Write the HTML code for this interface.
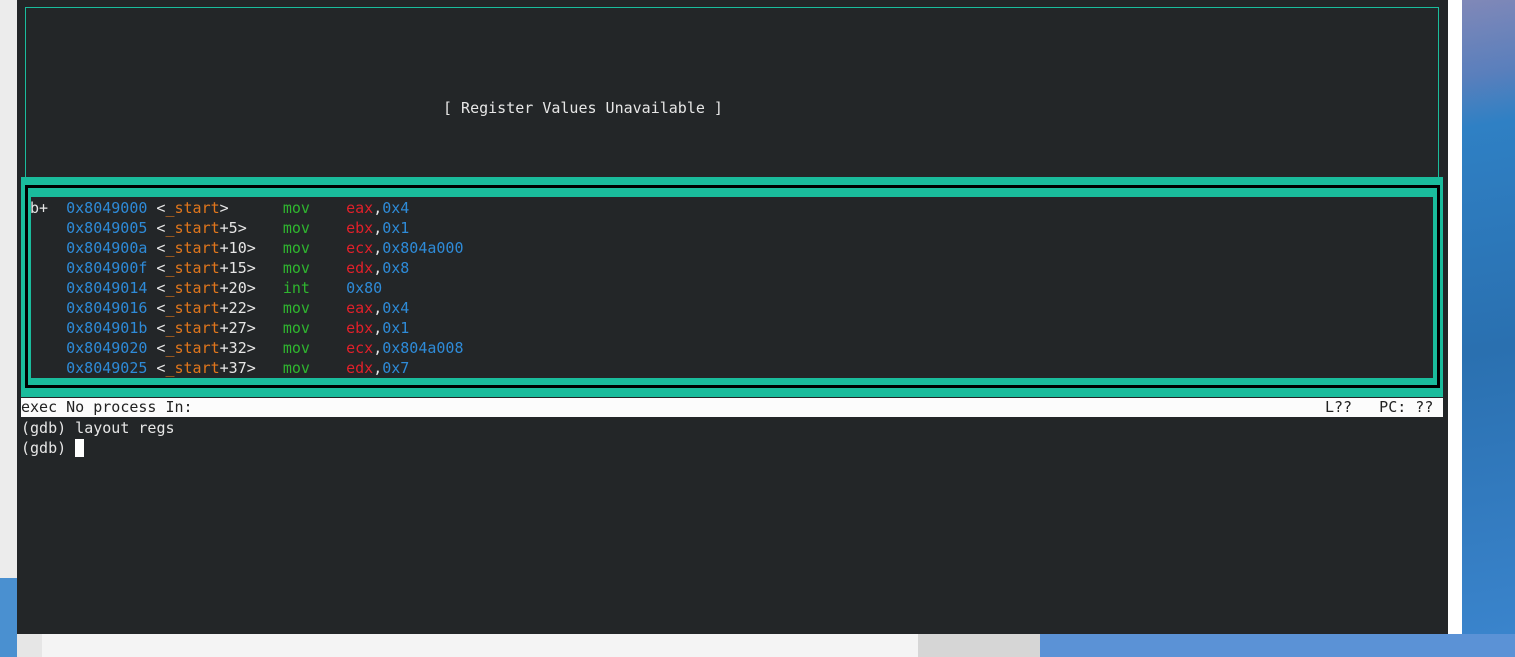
<!DOCTYPE html>
<html><head><style>
body{margin:0;width:1515px;height:657px;position:relative;overflow:hidden;background:#2f7fc0;font-family:"DejaVu Sans Mono","Liberation Mono",monospace;font-size:15px}
.a{position:absolute}
pre{margin:0;font:inherit;line-height:20px;white-space:pre}
.b{color:#2e8bd8}.o{color:#e0761c}.g{color:#2fb52f}.r{color:#e0202a}.w{color:#e6e6e6}
</style></head><body>
<div class="a" style="left:1462px;top:0;width:53px;height:634px;background:linear-gradient(170deg,#8088b8 0%,#5a7fbc 12%,#2f80c4 20%,#2a70b0 55%,#3a84cc 100%)"></div>
<div class="a" style="left:0;top:0;width:18px;height:578px;background:#ececec"></div>
<div class="a" style="left:0;top:578px;width:18px;height:79px;background:#4a90d0"></div>
<div class="a" style="left:17px;top:634px;width:25px;height:23px;background:#e6e6e6"></div>
<div class="a" style="left:42px;top:634px;width:876px;height:23px;background:#f4f4f4"></div>
<div class="a" style="left:918px;top:634px;width:122px;height:23px;background:#d6d6d6"></div>
<div class="a" style="left:1040px;top:634px;width:475px;height:23px;background:#5b92d6"></div>
<div class="a" style="left:1448px;top:0;width:14px;height:634px;background:#fff"></div>
<div class="a" style="left:17px;top:0;width:1431px;height:634px;background:#232628"></div>
<div class="a" style="left:25px;top:7px;width:1412px;height:180px;border:1px solid #1abc9c;border-bottom:none"></div>
<pre class="a w" style="left:443px;top:98px">[ Register Values Unavailable ]</pre>
<div class="a" style="left:21px;top:177px;width:1422px;height:220px;background:#1abc9c"></div>
<div class="a" style="left:25px;top:185px;width:1409px;height:197px;border:3px solid #000;background:#1abc9c"></div>
<div class="a" style="left:31px;top:197px;width:1402px;height:181px;background:#232628"></div>
<pre class="a w" style="left:30px;top:198px">b+  <span class="b">0x8049000</span> &lt;<span class="o">_start</span>&gt;      <span class="g">mov</span>    <span class="r">eax</span>,<span class="b">0x4</span>
    <span class="b">0x8049005</span> &lt;<span class="o">_start</span>+5&gt;    <span class="g">mov</span>    <span class="r">ebx</span>,<span class="b">0x1</span>
    <span class="b">0x804900a</span> &lt;<span class="o">_start</span>+10&gt;   <span class="g">mov</span>    <span class="r">ecx</span>,<span class="b">0x804a000</span>
    <span class="b">0x804900f</span> &lt;<span class="o">_start</span>+15&gt;   <span class="g">mov</span>    <span class="r">edx</span>,<span class="b">0x8</span>
    <span class="b">0x8049014</span> &lt;<span class="o">_start</span>+20&gt;   <span class="g">int</span>    <span class="b">0x80</span>
    <span class="b">0x8049016</span> &lt;<span class="o">_start</span>+22&gt;   <span class="g">mov</span>    <span class="r">eax</span>,<span class="b">0x4</span>
    <span class="b">0x804901b</span> &lt;<span class="o">_start</span>+27&gt;   <span class="g">mov</span>    <span class="r">ebx</span>,<span class="b">0x1</span>
    <span class="b">0x8049020</span> &lt;<span class="o">_start</span>+32&gt;   <span class="g">mov</span>    <span class="r">ecx</span>,<span class="b">0x804a008</span>
    <span class="b">0x8049025</span> &lt;<span class="o">_start</span>+37&gt;   <span class="g">mov</span>    <span class="r">edx</span>,<span class="b">0x7</span></pre>
<div class="a" style="left:21px;top:398px;width:1422px;height:19px;background:#fcfcfc"></div>
<pre class="a" style="left:21px;top:398px;color:#222;line-height:19px">exec No process In:</pre>
<pre class="a" style="left:1325px;top:398px;color:#222;line-height:19px">L??   PC: ??</pre>
<pre class="a w" style="left:21px;top:418px">(gdb) layout regs
(gdb) </pre>
<div class="a" style="left:75px;top:439px;width:9px;height:18px;background:#fff"></div>
</body></html>
